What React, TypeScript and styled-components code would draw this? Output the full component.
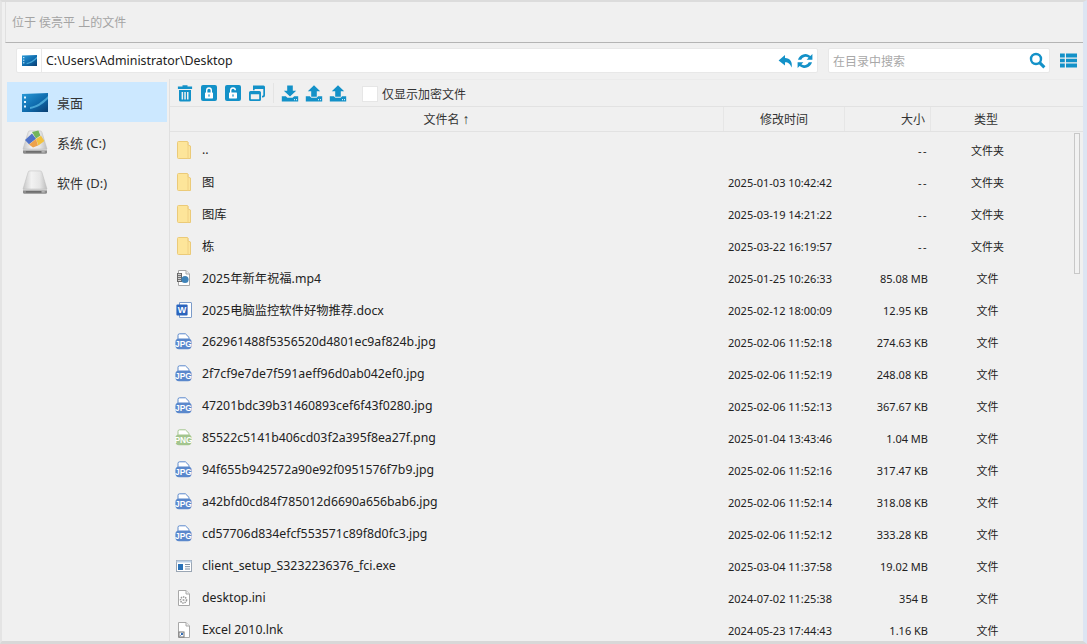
import React from "react";
import styled, { createGlobalStyle } from "styled-components";

const Global = createGlobalStyle`
  html, body { margin: 0; padding: 0; height: 100%; overflow: hidden; background: #f0f0f0; }
  #root { height: 100%; }
  * { box-sizing: border-box; }
`;

const FONT = `"Noto Sans", "Noto Sans CJK SC", sans-serif`;
const BLUE = "#1391c8";

const Win = styled.div`
  width: 1087px; height: 644px; overflow: hidden; display: flex; flex-direction: column;
  background: #f0f0f0; font-family: ${FONT}; font-size: 13px; color: #222;
  border-top: 2px solid #dcdcdc; border-bottom: 3px solid #d8d8d8;
  border-left: 2px solid #e4e4e4; border-right: 4px solid #dde5f3;
`;
const Title = styled.div`
  height: 41px; flex: none; margin-left: 3px; padding-left: 6px; display: flex; align-items: center;
  color: #a4a4a4; font-size: 12px; border-bottom: 1px solid #b4b4b4; border-left: 1px solid #e0e0e0;
`;
const AddressRow = styled.div`
  height: 36px; flex: none; display: flex; align-items: flex-start; padding: 5px 0 0 14px;
  border-bottom: 1px solid transparent;
`;
const PathBox = styled.div`
  width: 802px; height: 25px; background: #fff; border: 1px solid #e8e8e8; border-radius: 2px;
  display: flex; align-items: center; font-size: 12.4px;
`;
const PathIcon = styled.div`
  width: 25px; height: 100%; flex: none; display: flex; align-items: center; justify-content: center;
  border-right: 1px solid #e8e8e8; margin-right: 4px;
`;
const PathText = styled.span` flex: 1; color: #222; `;
const PathActions = styled.div` display: flex; gap: 3px; padding-right: 4px; align-items: center; `;
const SearchBox = styled.div`
  width: 222px; height: 25px; margin-left: 10px; background: #fff; border: 1px solid #e8e8e8; border-radius: 2px;
  display: flex; align-items: center; justify-content: space-between; padding: 0 3px 0 4px;
  color: #a8a8a8; font-size: 12px;
`;
const ViewBtn = styled.div` margin-left: 10px; display: flex; height: 25px; align-items: center; `;

const Main = styled.div` flex: 1; min-height: 0; display: flex; `;
const Side = styled.div`
  width: 168px; flex: none; padding: 3px 0 0 5px; border-right: 1px solid #e0e0e0;
`;
const SideItem = styled.div<{ $active?: boolean }>`
  width: 160px; height: 40px; display: flex; align-items: center; padding-left: 15px; gap: 9px;
  background: ${p => (p.$active ? "#cce8ff" : "transparent")}; font-size: 13px; color: #333;
`;
const Content = styled.div` flex: 1; min-width: 0; display: flex; flex-direction: column; `;
const Toolbar = styled.div`
  height: 28px; flex: none; display: flex; align-items: center; padding: 0 0 0 3px;
  border-bottom: 1px solid #e2e2e2; border-top: 1px solid #ebebeb;
`;
const ToolBtn = styled.div` width: 24px; height: 24px; display: flex; align-items: center; justify-content: center; `;
const ToolSep = styled.div` width: 1px; height: 20px; background: #e4e4e4; margin: 0 4px 0 4px; `;
const CheckWrap = styled.label` display: flex; align-items: center; margin-left: 12px; font-size: 12px; color: #333; padding-top: 2px; `;
const CheckBox = styled.span` width: 16px; height: 16px; background: #fff; border: 1px solid #e6e6e6; margin-right: 4px; `;
const Head = styled.div`
  height: 25px; flex: none; display: grid; grid-template-columns: 554px 121px 86px 110px; align-items: stretch;
  border-bottom: 1px solid #e2e2e2; color: #333; font-size: 12px;
`;
const HeadCell = styled.div<{ $align?: string }>`
  display: flex; align-items: center; justify-content: ${p => p.$align || "center"};
  border-right: 1px solid #e6e6e6; padding: 0 5px;
  &:last-child { border-right: 0; padding: 0; }
`;
const SortArrow = styled.span` margin-left: 3px; font-size: 14px; line-height: 1; font-family: "Liberation Sans", sans-serif; `;
const ListArea = styled.div` flex: 1; min-height: 0; display: flex; overflow: hidden; position: relative; `;
const List = styled.div` flex: 1; min-width: 0; padding-top: 2px; `;
const Row = styled.div`
  height: 32px; display: grid; grid-template-columns: 554px 121px 86px 110px; align-items: center; color: #222;
`;
const NameCell = styled.div` display: flex; align-items: center; padding: 0 0 1px 5px; gap: 10px; font-size: 12.3px; white-space: nowrap; `;
const IconSlot = styled.span` width: 17px; height: 18px; flex: none; display: flex; align-items: center; justify-content: center; `;
const TimeCell = styled.div` padding-left: 4px; font-size: 11px; white-space: nowrap; `;
const SizeCell = styled.div<{ $dash?: boolean }>`
  text-align: right; padding-right: 3px; font-size: 11px;
  letter-spacing: ${p => (p.$dash ? "1.5px" : "normal")};
`;
const TypeCell = styled.div` text-align: center; font-size: 11px; padding-left: 3px; `;
const ScrollTrack = styled.div` width: 9px; flex: none; margin-right: 0; padding-top: 1px; `;
const ScrollThumb = styled.div` width: 6px; height: 141px; background: #f2f2f2; border: 1px solid #c8c8c8; `;

const Blue = ({ children, w = 18, h = 18, vb = "0 0 18 18" }: { children: React.ReactNode; w?: number; h?: number; vb?: string }) => (
  <svg width={w} height={h} viewBox={vb} fill={BLUE}>{children}</svg>
);

const TrashIcon = () => (
  <Blue><path d="M6.5 1.2h5v1.4h4.6V5H1.9V2.6h4.6zM3 6h12v10a1.6 1.6 0 0 1-1.6 1.6H4.6A1.6 1.6 0 0 1 3 16z" /><path d="M5.6 8h1.5v7.4H5.6zM8.3 8h1.5v7.4H8.3zM11 8h1.5v7.4H11z" fill="#f0f0f0" /></Blue>
);
const LockIcon = ({ open }: { open?: boolean }) => (
  <Blue>
    <rect x="1" y="1" width="16" height="16" rx="2" />
    <path d={open ? "M6 9V6.3a3 3 0 0 1 6 0h-1.4a1.6 1.6 0 0 0-3.2 0V9z" : "M6 9V6.3a3 3 0 0 1 6 0V9h-1.4V6.3a1.6 1.6 0 0 0-3.2 0V9z"} fill="#fff" />
    <rect x="5" y="8.6" width="8" height="5.8" rx=".6" fill="#fff" />
    <rect x="8.4" y="10.4" width="1.2" height="2.2" fill={BLUE} />
  </Blue>
);
const WindowIcon = () => (
  <Blue>
    <path fillRule="evenodd" d="M5 1.5h10.5A1.5 1.5 0 0 1 17 3v8a2.5 2.5 0 0 1-2.5 2.5H14v-1.8h.6a.7.7 0 0 0 .7-.7V5H6.6v1.2H5z" />
    <path fillRule="evenodd" d="M2.6 7h8.8A1.6 1.6 0 0 1 13 8.6v6.8a1.6 1.6 0 0 1-1.6 1.6H2.6A1.6 1.6 0 0 1 1 15.4V8.6A1.6 1.6 0 0 1 2.6 7zM2.8 10.2v4.6a.5.5 0 0 0 .5.5h7.4a.5.5 0 0 0 .5-.5v-4.6z" />
  </Blue>
);
const TrayIcon = ({ down }: { down?: boolean }) => (
  <Blue>
    <path d={down ? "M6.2 1.5h5.6v5.2h3.4L9 12.6 2.8 6.7h3.4z" : "M9 1.2l6.2 6h-3.4v5.6H6.2V7.2H2.8z"} />
    <path d="M.8 12.2h4l1.6 1.6h5.2l1.6-1.6h4v5.2H.8z" />
    <rect x="13" y="15.2" width="1" height="1" fill="#fff" /><rect x="15" y="15.2" width="1" height="1" fill="#fff" />
  </Blue>
);
const ReplyIcon = () => (
  <Blue w={16} h={16} vb="0 0 16 16"><path d="M7 2L.6 7.4 7 12.6V9.2c3.4 0 5 1.4 6.6 5.4 1.2-5.8-1.6-9.4-6.6-9.6z" /></Blue>
);
const RefreshIcon = () => (
  <Blue w={16} h={16} vb="0 0 16 16"><path d="M15.4 1v5.8H9.6l2-2A4.8 4.8 0 0 0 4.2 6.8H1A7.6 7.6 0 0 1 13.4 3zM.6 15V9.2h5.8l-2 2a4.8 4.8 0 0 0 7.4-2H15A7.6 7.6 0 0 1 2.6 13z" /></Blue>
);
const SearchIcon = () => (
  <svg width="17" height="17" viewBox="0 0 17 17" fill="none" stroke={BLUE}><circle cx="7" cy="7" r="5" strokeWidth="2.4" /><path d="M10.6 10.6L15.4 15.4" strokeWidth="3" /></svg>
);
const GridViewIcon = () => (
  <Blue w={17} h={15} vb="0 0 17 15"><path d="M0 .5h4.8v4H0zM6 .5h11v4H6zM0 5.7h4.8v3.6H0zM6 5.7h11v3.6H6zM0 10.5h4.8v4H0zM6 10.5h11v4H6z" /></Blue>
);

const DesktopIcon = ({ w = 26, h = 19 }: { w?: number; h?: number }) => (
  <svg width={w} height={h} viewBox="0 0 26 19">
    <defs><linearGradient id="dk" x1="0" y1="0" x2="1" y2="1"><stop offset="0" stopColor="#2a9ad8" /><stop offset=".55" stopColor="#0f6cae" /><stop offset="1" stopColor="#0a3e72" /></linearGradient></defs>
    <path d="M0 1l26-1v19H0z" fill="url(#dk)" />
    <path d="M8 14C14 13 20 9 26 3v3C20 12 14 15 8 16z" fill="#5fc0ea" opacity=".7" />
    <rect x="2" y="3.5" width="2" height="2" fill="#e4f4ff" /><rect x="2" y="8" width="2" height="2" fill="#e4f4ff" /><rect x="2" y="12.5" width="2" height="2" fill="#e4f4ff" />
  </svg>
);
const DriveBase = ({ id }: { id: string }) => (
  <>
    <defs>
      <linearGradient id={id} x1="0" y1="0" x2="1" y2="0">
        <stop offset="0" stopColor="#c6c6c6" /><stop offset=".35" stopColor="#f2f2f2" /><stop offset=".7" stopColor="#e6e6e6" /><stop offset="1" stopColor="#bdbdbd" />
      </linearGradient>
    </defs>
    <path d="M6 2.5a2 2 0 0 1 2-1.6h10a2 2 0 0 1 2 1.6L25 19H1z" fill={`url(#${id})`} stroke="#bcbcbc" strokeWidth=".5" />
    <path d="M1 19h24v3.4a1.4 1.4 0 0 1-1.4 1.4H2.4A1.4 1.4 0 0 1 1 22.4z" fill="#8c8c8c" />
    <rect x="1" y="19" width="24" height="1.6" fill="#cfcfcf" />
    <rect x="4" y="21.4" width="18" height="1" fill="#5c5c5c" />
    <rect x="19.5" y="21.4" width="3" height="1" fill="#e0e0e0" />
  </>
);
const SysDrive = () => (
  <svg width="26" height="25" viewBox="0 0 26 25">
    <DriveBase id="drvC" />
    <path d="M3 10l7-6.4 4 5.2-7 5.4z" fill="#4f72c8" /><path d="M10 2l6.4-1.6 2 5.2-4.4 3z" fill="#74b45c" />
    <path d="M14 9l5-3.2 3.4 5.2-6 4.4z" fill="#f2c23e" /><path d="M7 14.4l7-5.4 2 6.4-5 2.2z" fill="#eda24a" />
  </svg>
);
const DataDrive = () => (
  <svg width="26" height="25" viewBox="0 0 26 25"><DriveBase id="drvD" /></svg>
);

const FolderIcon = () => (
  <svg width="14" height="18" viewBox="0 0 14 18">
    <path d="M.5 1.5a1 1 0 0 1 1-1h9l.5.5V4l2.5 1v12.5H1.5a1 1 0 0 1-1-1z" fill="#fde59a" stroke="#ebca78" />
    <path d="M11 1v16.5" stroke="#f0d084" strokeWidth="1" />
  </svg>
);
const BadgeFile = ({ color, label }: { color: string; label: string }) => (
  <svg width="17" height="17" viewBox="0 0 17 17">
    <path d="M3 8V2.4A1.6 1.6 0 0 1 4.6.8H10.4l3.6 3.6V8z" fill="#fff" stroke={color} />
    <rect x=".4" y="5.6" width="16.2" height="10.6" rx="3.6" fill={color} />
    <text x="8.5" y="13.9" textAnchor="middle" fontSize="8.4" fontWeight="700" fill="#fff" fontFamily="Liberation Sans, sans-serif">{label}</text>
  </svg>
);
const JpgIcon = () => <BadgeFile color="#5a88cc" label="JPG" />;
const PngIcon = () => <BadgeFile color="#a3c58e" label="PNG" />;
const PageBase = ({ children }: { children?: React.ReactNode }) => (
  <svg width="16" height="16" viewBox="0 0 16 16">
    <path d="M2.5.5h7.5l3.5 3.5v11.5h-11z" fill="#fff" stroke="#a8a8a8" />
    <path d="M10 .5V4h3.5" fill="#eee" stroke="#a8a8a8" />
    {children}
  </svg>
);
const VideoIcon = () => (
  <PageBase><rect x="1" y="3" width="5" height="9" fill="#666" /><path d="M2 4.4h3M2 6.4h3M2 8.4h3M2 10.4h3" stroke="#ddd" /><circle cx="9" cy="9.5" r="3.6" fill="#3f83b8" /></PageBase>
);
const WordIcon = () => (
  <svg width="16" height="16" viewBox="0 0 16 16">
    <path d="M3.5.5H15a.5.5 0 0 1 .5.5v14a.5.5 0 0 1-.5.5H3.5z" fill="#fff" stroke="#7b9bc9" />
    <rect x=".4" y="2.4" width="11.2" height="11.2" rx="1" fill="#2b64bd" />
    <text x="6" y="11.4" textAnchor="middle" fontSize="9" fontWeight="700" fill="#fff" fontFamily="Liberation Sans, sans-serif">W</text>
  </svg>
);
const ExeIcon = () => (
  <svg width="16" height="14" viewBox="0 0 16 14">
    <rect x=".5" y="1.5" width="15" height="11" fill="#fff" stroke="#9aa6b4" />
    <rect x=".5" y="1.5" width="15" height="2" fill="#bcd0e6" />
    <rect x="2" y="5" width="5" height="6" fill="#2a72b8" />
    <path d="M9 5.5h5M9 7.7h5M9 10h5" stroke="#7e8ea0" />
  </svg>
);
const IniIcon = () => (
  <PageBase><circle cx="7.5" cy="10" r="3" fill="none" stroke="#999" strokeWidth="1.6" strokeDasharray="1.4 .8" /><circle cx="7.5" cy="10" r="1.1" fill="#aaa" /></PageBase>
);
const LnkIcon = () => (
  <PageBase><rect x="3" y="10" width="5" height="5" fill="#fff" stroke="#777" /><path d="M4.4 13.6l2-2M5 11.4h1.5v1.5" stroke="#2060b0" fill="none" /></PageBase>
);

type R = [React.ReactNode, string, string, string, string];
const rows: R[] = [
  [<FolderIcon />, "..", "", "--", "文件夹"],
  [<FolderIcon />, "图", "2025-01-03 10:42:42", "--", "文件夹"],
  [<FolderIcon />, "图库", "2025-03-19 14:21:22", "--", "文件夹"],
  [<FolderIcon />, "栋", "2025-03-22 16:19:57", "--", "文件夹"],
  [<VideoIcon />, "2025年新年祝福.mp4", "2025-01-25 10:26:33", "85.08 MB", "文件"],
  [<WordIcon />, "2025电脑监控软件好物推荐.docx", "2025-02-12 18:00:09", "12.95 KB", "文件"],
  [<JpgIcon />, "262961488f5356520d4801ec9af824b.jpg", "2025-02-06 11:52:18", "274.63 KB", "文件"],
  [<JpgIcon />, "2f7cf9e7de7f591aeff96d0ab042ef0.jpg", "2025-02-06 11:52:19", "248.08 KB", "文件"],
  [<JpgIcon />, "47201bdc39b31460893cef6f43f0280.jpg", "2025-02-06 11:52:13", "367.67 KB", "文件"],
  [<PngIcon />, "85522c5141b406cd03f2a395f8ea27f.png", "2025-01-04 13:43:46", "1.04 MB", "文件"],
  [<JpgIcon />, "94f655b942572a90e92f0951576f7b9.jpg", "2025-02-06 11:52:16", "317.47 KB", "文件"],
  [<JpgIcon />, "a42bfd0cd84f785012d6690a656bab6.jpg", "2025-02-06 11:52:14", "318.08 KB", "文件"],
  [<JpgIcon />, "cd57706d834efcf553571c89f8d0fc3.jpg", "2025-02-06 11:52:12", "333.28 KB", "文件"],
  [<ExeIcon />, "client_setup_S3232236376_fci.exe", "2025-03-04 11:37:58", "19.02 MB", "文件"],
  [<IniIcon />, "desktop.ini", "2024-07-02 11:25:38", "354 B", "文件"],
  [<LnkIcon />, "Excel 2010.lnk", "2024-05-23 17:44:43", "1.16 KB", "文件"],
];

export default function App() {
  return (
    <Win>
      <Global />
      <Title>位于 侯亮平 上的文件</Title>
      <AddressRow>
        <PathBox>
          <PathIcon><DesktopIcon w={15} h={11} /></PathIcon>
          <PathText>C:\Users\Administrator\Desktop</PathText>
          <PathActions><ReplyIcon /><RefreshIcon /></PathActions>
        </PathBox>
        <SearchBox>在目录中搜索<SearchIcon /></SearchBox>
        <ViewBtn><GridViewIcon /></ViewBtn>
      </AddressRow>
      <Main>
        <Side>
          <SideItem $active><DesktopIcon />桌面</SideItem>
          <SideItem><SysDrive />系统 (C:)</SideItem>
          <SideItem><DataDrive />软件 (D:)</SideItem>
        </Side>
        <Content>
          <Toolbar>
            <ToolBtn><TrashIcon /></ToolBtn>
            <ToolBtn><LockIcon /></ToolBtn>
            <ToolBtn><LockIcon open /></ToolBtn>
            <ToolBtn><WindowIcon /></ToolBtn>
            <ToolSep />
            <ToolBtn><TrayIcon down /></ToolBtn>
            <ToolBtn><TrayIcon /></ToolBtn>
            <ToolBtn><TrayIcon /></ToolBtn>
            <CheckWrap><CheckBox />仅显示加密文件</CheckWrap>
          </Toolbar>
          <Head>
            <HeadCell>文件名<SortArrow>↑</SortArrow></HeadCell>
            <HeadCell>修改时间</HeadCell>
            <HeadCell $align="flex-end">大小</HeadCell>
            <HeadCell>类型</HeadCell>
          </Head>
          <ListArea>
            <List>
              {rows.map(r => (
                <Row key={r[1]}>
                  <NameCell><IconSlot>{r[0]}</IconSlot><span>{r[1]}</span></NameCell>
                  <TimeCell>{r[2]}</TimeCell>
                  <SizeCell $dash={r[3] === "--"}>{r[3]}</SizeCell>
                  <TypeCell>{r[4]}</TypeCell>
                </Row>
              ))}
            </List>
            <ScrollTrack><ScrollThumb /></ScrollTrack>
          </ListArea>
        </Content>
      </Main>
    </Win>
  );
}
